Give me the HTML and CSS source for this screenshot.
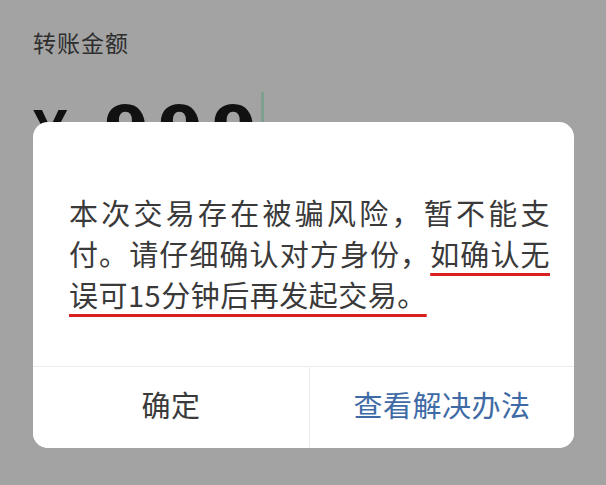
FILE: index.html
```html
<!DOCTYPE html>
<html lang="zh-CN">
<head>
  <meta charset="UTF-8" />
  <title>转账</title>
  <link rel="stylesheet" href="styles.css">
</head>
<body>

<div class="page">
  <div class="label">转账金额</div>
  <div class="amount">
    <span class="yen">¥</span>
    <span class="num">999</span>
    <span class="cursor"></span>
  </div>
</div>

<div class="mask">
  <div class="dialog">
    <div class="dialog-body">
      本次交易存在被骗风险，暂不能支付。请仔细确认对方身份，<span class="mark">如确认无误可15分钟后再发起交易。</span>
    </div>
    <div class="dialog-foot">
      <button class="btn">确定</button>
      <button class="btn primary">查看解决办法</button>
    </div>
  </div>
</div>

</body>
</html>
```

FILE: styles.css
```css
* { box-sizing: border-box; }
html, body {
  margin: 0;
  height: 100%;
}
body {
  background: #a3a3a3;
  font-family: "Noto Sans CJK SC", "Noto Sans", sans-serif;
  color: #333;
  overflow: hidden;
  position: relative;
}
.page {
  padding: 26px 33px 0;
}
.label {
  font-size: 23px;
  line-height: 32px;
  color: #2e2e2e;
  letter-spacing: 1px;
}
.amount {
  display: flex;
  align-items: flex-start;
  margin-top: 34px;
  height: 80px;
}
.yen {
  font-family: "Liberation Sans", sans-serif;
  font-weight: bold;
  font-size: 62px;
  line-height: 1;
  color: #111;
  margin-top: 8px;
}
.num {
  font-family: "DejaVu Sans", sans-serif;
  font-weight: bold;
  font-size: 66px;
  line-height: 1;
  color: #111;
  margin-left: 36px;
  letter-spacing: 8px;
  margin-top: 6px;
}
.cursor {
  width: 3px;
  height: 50px;
  background: #7fa08f;
  margin-left: -4px;
}

.mask {
  position: absolute;
  left: 33px;
  top: 122px;
  width: 541px;
}
.dialog {
  background: #fff;
  border-radius: 15px;
  overflow: hidden;
}
.dialog-body {
  padding: 70px 24px 51px 36px;
  font-size: 29px;
  line-height: 41px;
  letter-spacing: 0.5px;
  text-align: justify;
  color: #3a3a3a;
}
.mark {
  text-decoration: underline;
  text-decoration-color: #d9201f;
  text-decoration-thickness: 3px;
  text-underline-offset: 7px;
}
.dialog-foot {
  display: flex;
  border-top: 1px solid #ececec;
  height: 82px;
}
.btn {
  flex: 1;
  border: 0;
  background: #fff;
  font-family: inherit;
  font-size: 29px;
  letter-spacing: 0.5px;
  color: #3a3a3a;
  padding: 0 0 8px;
}
.btn:first-child {
  flex: 0 0 276px;
}
.btn + .btn {
  border-left: 1px solid #ececec;
}
.btn.primary {
  color: #3e6ba6;
}
```
